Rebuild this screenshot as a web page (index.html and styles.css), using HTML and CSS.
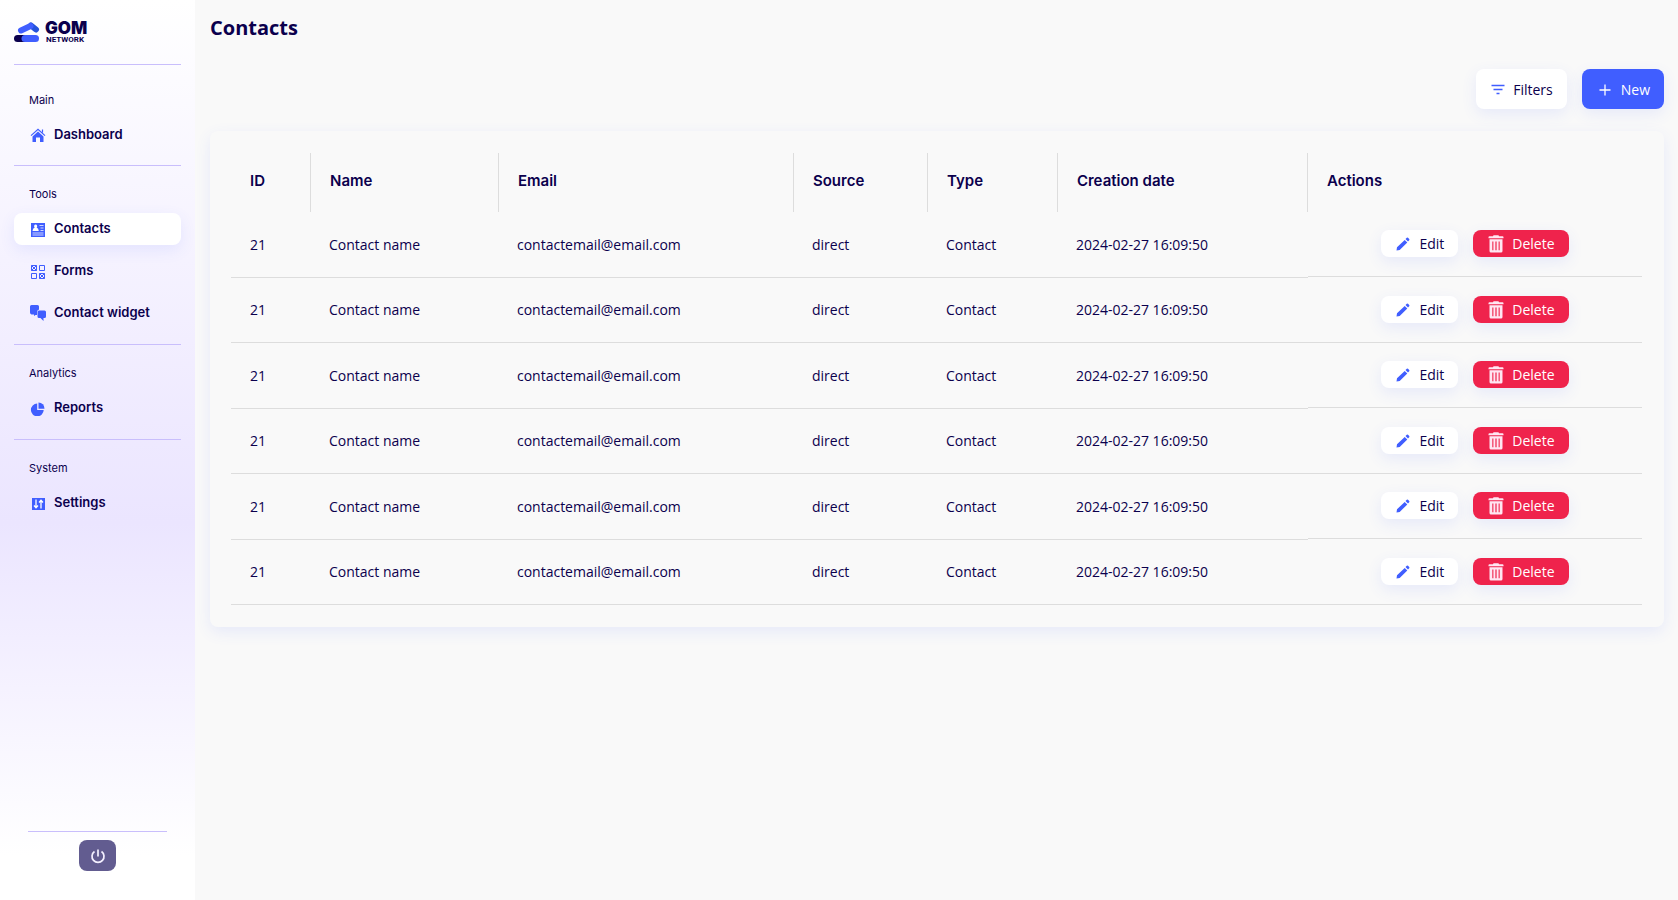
FILE: index.html
```html
<!DOCTYPE html>
<html lang="en">
<head>
<meta charset="utf-8">
<title>Contacts</title>
<link rel="stylesheet" href="styles.css">
</head>
<body>
<svg class="sprite" aria-hidden="true">
  <symbol id="i-pencil" viewBox="0 0 14 14"><path d="M.5 13.5 1 10.3 8.7 2.9 11.3 5.4 3.7 12.9zM9.5 2.100 10.800.8Q11.400.3 12 .8L13.200 2Q13.700 2.600 13.200 3.200L12 4.600z"/></symbol>
  <symbol id="i-trash" viewBox="0 0 16 18"><path fill-rule="evenodd" d="M5 1.200Q5 .3 6 .3h4q1 0 1 .9h3.500q1 0 1 1v1H.5v-1q0-1 1-1zM1.500 4.200h13V16q0 1.500-1.500 1.500H3Q1.500 17.500 1.500 16zM4.300 6.500v8.700h1.100V6.500zm3.100 0v8.700h1.200V6.500zm3.200 0v8.700h1.100V6.500z"/></symbol>
</svg>
<div class="app">
  <aside class="sidebar">
    <a class="logo" href="#" aria-label="GOM Network">
      <svg width="84" height="28" viewBox="0 0 84 28">
        <path d="M17 5.500 22 9.500" stroke="#2453dc" stroke-width="6" stroke-linecap="round"/>
        <path d="M7 10.500 16.500 6" stroke="#405eff" stroke-width="6" stroke-linecap="round"/>
        <path d="M3.500 18.500h8" stroke="#0b004d" stroke-width="7" stroke-linecap="round"/>
        <path d="M11 18.500h10.500" stroke="#405eff" stroke-width="7" stroke-linecap="round"/>
        <text class="logo-name" x="31" y="14">GOM</text>
        <text class="logo-sub" x="32" y="22">NETWORK</text>
      </svg>
    </a>
    <nav class="nav">
      <section class="group first">
        <h2>Main</h2>
        <a href="#"><svg viewBox="0 0 16 16"><path d="M8 4.600 13.500 9.500V15H10v-4.500H6V15H2.500V9.500z"/><path d="M1 8.600 8 2.200l7 6.400M12.500 5.500V2.500" fill="none" stroke="currentColor" stroke-width="1.200"/></svg><span>Dashboard</span></a>
      </section>
      <section class="group">
        <h2>Tools</h2>
        <a class="active" href="#"><svg viewBox="0 0 16 16"><path d="M1 2h14v14H1z"/><path d="M5.600 3.500a1.700 1.700 0 0 1 1 3q2 .7 2.200 3.500H2.500Q2.700 7.200 4.700 6.500a1.700 1.700 0 0 1 .9-3z" fill="#fff"/><path d="M9.500 4.500h4M10.500 7h3M10.500 9.500h3M2.500 12h11M2.500 14h11" stroke="#fff" opacity=".75"/></svg><span>Contacts</span></a>
        <a href="#"><svg viewBox="0 0 16 16"><path d="M1.500 2.500h5v5h-5zM9.500 2.500h5v5h-5zM1.500 10.500h5v5h-5zM9.500 10.500h5v5h-5zM1.500 2.500l5 5m0-5-5 5m8 3 5 5m0-5-5 5" fill="none" stroke="currentColor"/></svg><span>Forms</span></a>
        <a href="#"><svg viewBox="0 0 16 16"><path d="M1.500 0h6Q9 0 9 1.500V4.500Q7 5 7 7v3H5.500L4 11V9.500H1.500Q0 9 0 7.500v-6Q0 0 1.500 0z"/><path d="M9 5.500h5.500Q16 5.500 16 7v4.500Q16 13 14.500 13H13.500v3L10.500 13H9Q7.500 13 7.500 11.500V7Q7.500 5.500 9 5.500z"/></svg><span>Contact widget</span></a>
      </section>
      <section class="group">
        <h2>Analytics</h2>
        <a href="#"><svg viewBox="0 0 16 16"><path d="M7.200 3.500V10h6.500A6.400 6.400 0 1 1 7.200 3.500z"/><path d="M8.500 2.500a6 6 0 0 1 6 6.200h-6z"/></svg><span>Reports</span></a>
      </section>
      <section class="group">
        <h2>System</h2>
        <a href="#"><svg viewBox="0 0 16 16"><path d="M2 3h13v12H2z"/><path d="M6 4.500v8M4 10.500l2 2.200 2-2.200M11 13.500v-8M9 7.500l2-2.200 2 2.200" fill="none" stroke="#fff" stroke-width="1.300"/></svg><span>Settings</span></a>
      </section>
    </nav>
    <div class="session">
      <button type="button" class="power" aria-label="Log out"><svg viewBox="0 0 16 16"><path d="M4.500 3.500a6 6 0 1 0 7 0M8 1.500v7" fill="none" stroke="currentColor" stroke-width="1.700"/></svg></button>
    </div>
  </aside>
  <main class="main">
    <h1>Contacts</h1>
    <div class="toolbar">
      <button type="button" class="btn"><svg viewBox="0 0 14 14"><path d="M.5 2.500h13M2.500 6.500h9M5.500 10.500h3" stroke="currentColor" stroke-width="1.500"/></svg>Filters</button>
      <button type="button" class="btn primary"><svg viewBox="0 0 14 14"><path d="M7 1.500v11M1.500 7h11" stroke="currentColor" stroke-width="1.300"/></svg>New</button>
    </div>
    <div class="card">
      <table>
        <colgroup><col class="c-id"><col class="c-name"><col class="c-email"><col class="c-source"><col class="c-type"><col class="c-date"><col></colgroup>
        <thead><tr><th>ID</th><th>Name</th><th>Email</th><th>Source</th><th>Type</th><th>Creation date</th><th>Actions</th></tr></thead>
        <tbody>
          <tr><td>21</td><td>Contact name</td><td>contactemail@email.com</td><td>direct</td><td>Contact</td><td>2024-02-27 16:09:50</td><td class="actions"><div><button type="button" class="btn small"><svg><use href="#i-pencil"/></svg>Edit</button><button type="button" class="btn small danger"><svg><use href="#i-trash"/></svg>Delete</button></div></td></tr>
          <tr><td>21</td><td>Contact name</td><td>contactemail@email.com</td><td>direct</td><td>Contact</td><td>2024-02-27 16:09:50</td><td class="actions"><div><button type="button" class="btn small"><svg><use href="#i-pencil"/></svg>Edit</button><button type="button" class="btn small danger"><svg><use href="#i-trash"/></svg>Delete</button></div></td></tr>
          <tr><td>21</td><td>Contact name</td><td>contactemail@email.com</td><td>direct</td><td>Contact</td><td>2024-02-27 16:09:50</td><td class="actions"><div><button type="button" class="btn small"><svg><use href="#i-pencil"/></svg>Edit</button><button type="button" class="btn small danger"><svg><use href="#i-trash"/></svg>Delete</button></div></td></tr>
          <tr><td>21</td><td>Contact name</td><td>contactemail@email.com</td><td>direct</td><td>Contact</td><td>2024-02-27 16:09:50</td><td class="actions"><div><button type="button" class="btn small"><svg><use href="#i-pencil"/></svg>Edit</button><button type="button" class="btn small danger"><svg><use href="#i-trash"/></svg>Delete</button></div></td></tr>
          <tr><td>21</td><td>Contact name</td><td>contactemail@email.com</td><td>direct</td><td>Contact</td><td>2024-02-27 16:09:50</td><td class="actions"><div><button type="button" class="btn small"><svg><use href="#i-pencil"/></svg>Edit</button><button type="button" class="btn small danger"><svg><use href="#i-trash"/></svg>Delete</button></div></td></tr>
          <tr><td>21</td><td>Contact name</td><td>contactemail@email.com</td><td>direct</td><td>Contact</td><td>2024-02-27 16:09:50</td><td class="actions"><div><button type="button" class="btn small"><svg><use href="#i-pencil"/></svg>Edit</button><button type="button" class="btn small danger"><svg><use href="#i-trash"/></svg>Delete</button></div></td></tr>
        </tbody>
      </table>
    </div>
  </main>
</div>
</body>
</html>
```
FILE: styles.css
```css
:root {
  --ink: #0b004d;
  --blue: #405eff;
  --red: #ef234c;
  --rule: #c9befc;
  --line: #dddddd;
  --shadow: 0 5px 15px rgba(64, 94, 255, 0.1);
  --ui: "Open Sans", "Noto Sans", sans-serif;
  --label: Inter, Roboto, sans-serif;
}

* { box-sizing: border-box; }

body {
  margin: 0;
  background: #f9f9f9;
  color: var(--ink);
  font: 400 14px/20px var(--ui);
}

.sprite { display: none; }

.app { display: flex; min-height: 100vh; }

/* Sidebar */
.sidebar {
  display: flex;
  flex-direction: column;
  flex: none;
  width: 195px;
  padding: 20px 14px 29px;
  background: linear-gradient(#fff 0%, #ebe5ff 58%, #fff 95%);
}

.logo { display: flex; height: 44px; }
.logo svg { fill: none; overflow: visible; }
.logo-name { font: 900 17px var(--label); fill: var(--ink); }
.logo-sub { font: 700 8px Roboto, sans-serif; fill: var(--ink); }

.nav { flex: 1; }

.group {
  display: flex;
  flex-direction: column;
  gap: 10px;
  padding: 20px 0 15px;
  border-top: 1px solid var(--rule);
}
.group.first { padding: 27px 0 14px; }

.group h2 {
  margin: 0 0 1px;
  padding-left: 15px;
  font: 400 11px/16px var(--label);
}

.group a {
  display: flex;
  align-items: center;
  gap: 8px;
  height: 32px;
  padding-left: 16px;
  border-radius: 8px;
  color: var(--ink);
  font: 600 13px/20px var(--label);
  text-decoration: none;
}
.group a span { padding-bottom: 2px; }
.group a.active { background: #fff; box-shadow: var(--shadow); }
.group svg { width: 16px; height: 16px; color: var(--blue); fill: var(--blue); }

.session {
  display: flex;
  justify-content: center;
  margin: 0 14px;
  padding-top: 8px;
  border-top: 1px solid var(--rule);
}

.power {
  display: flex;
  align-items: center;
  justify-content: center;
  width: 37px;
  height: 31px;
  padding: 0;
  border: 0;
  border-radius: 8px;
  background: #625c90;
  color: #f4f0ff;
}
.power svg { width: 16px; height: 16px; }

/* Main column */
.main { flex: 1; min-width: 0; padding: 13px 14px 14px 15px; }

h1 { margin: 0; font: 700 20px/30px var(--ui); }

.toolbar {
  display: flex;
  justify-content: flex-end;
  gap: 15px;
  margin: 26px 0 22px;
}

.btn {
  display: flex;
  align-items: center;
  gap: 8px;
  height: 40px;
  padding: 1px 14px 0 15px;
  border: 0;
  border-radius: 8px;
  background: #fff;
  box-shadow: var(--shadow);
  color: var(--ink);
  font: 400 14px/20px var(--ui);
}
.btn svg { width: 14px; height: 14px; color: var(--blue); fill: var(--blue); }
.btn.primary { padding-left: 16px; gap: 9px; background: var(--blue); color: #fff; }
.btn.primary svg { color: #fff; }
.btn.small { gap: 9px; height: 27px; padding: 0 14px 0 15px; }
.btn.danger { gap: 8px; padding-left: 15px; background: var(--red); color: #fff; }
.btn.danger svg { width: 16px; height: 18px; fill: #ffe6f2; }

.card {
  padding: 22px 22px 22px 21px;
  border-radius: 8px;
  box-shadow: var(--shadow);
}

table {
  width: 100%;
  border-collapse: separate;
  border-spacing: 0;
  table-layout: fixed;
}

.c-id { width: 5.67%; }
.c-name { width: 13.32%; }
.c-email { width: 20.91%; }
.c-source { width: 9.5%; }
.c-type { width: 9.21%; }
.c-date { width: 17.72%; }

th {
  height: 59px;
  padding: 0 19px 3px;
  border-right: 1px solid var(--line);
  font: 600 15px/20px var(--label);
  text-align: left;
}
th:last-child { border-right: 0; }

td {
  height: 65px;
  padding: 0 18px;
  border-bottom: 1px solid var(--line);
}
td:first-child { padding-left: 19px; }
tr:nth-child(odd) td { height: 66px; }

td.actions { padding: 0; border-bottom: 0; vertical-align: top; }
.actions div {
  display: flex;
  align-items: center;
  justify-content: center;
  gap: 15px;
  height: 65px;
  padding-bottom: 1px;
  border-bottom: 1px solid var(--line);
}
```
